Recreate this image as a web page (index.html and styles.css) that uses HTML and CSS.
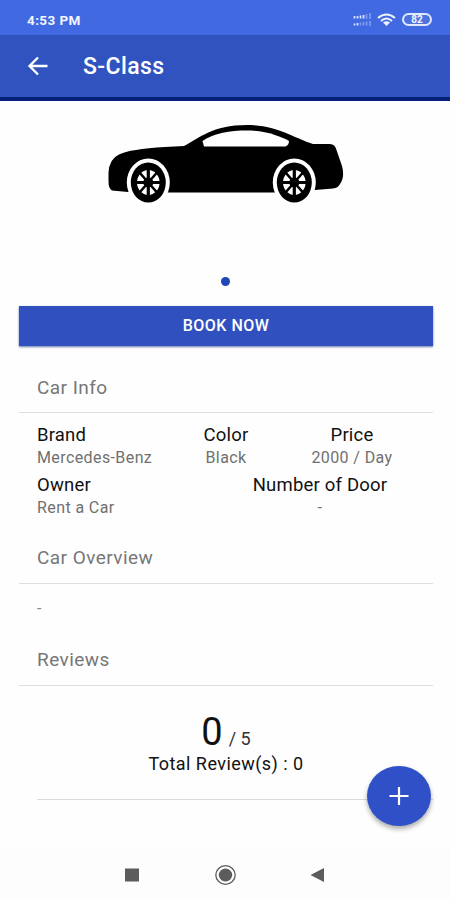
FILE: index.html
```html
<!DOCTYPE html>
<html lang="en">
<head>
<meta charset="utf-8">
<title>S-Class</title>
<link rel="stylesheet" href="styles.css">
</head>
<body>
<div class="screen">
  <div class="status">
    <span class="time">4:53 PM</span>
    <div class="status-icons">
      <svg width="18" height="14" viewBox="0 0 18 14" fill="none" stroke="#dfe7ff" stroke-width="1.7">
        <path d="M1.5 3v2.5M4.500 3v2.5M7.500 2.500v3M10.500 2v3.500M1.500 10.500v2M4.500 10v2.500"/>
        <path d="M13.500 1v5M17 0v6M7.500 9.500v3M10.500 9v3.500M13.500 8.500v4M17 8v5" opacity=".4"/>
      </svg>
      <svg width="19" height="14" viewBox="0 0 19 14" fill="none" stroke="#eef3ff" stroke-width="2">
        <path d="M1 5Q9.500-2 18 5M4 8Q9.500 3 15 8"/><path d="M6 9.500Q9.500 7 13 9.500L9.500 13z" fill="#eef3ff" stroke="none"/>
      </svg>
      <div class="battery">82</div>
    </div>
  </div>
  <header class="bar">
    <svg width="22" height="20" viewBox="0 0 22 20" fill="none" stroke="#fff" stroke-width="2.300"><path d="M20.500 10H3M11 1.500L2.500 10L11 18.500"/></svg>
    <h1>S-Class</h1>
  </header>
  <section class="gallery">
    <svg class="car" width="240" height="84" viewBox="105 122 240 84">
      <path d="M112 190.500Q108.500 189 108.500 181V173Q109 159 119 154.500Q130 149 165 147L184 146C200 138 212 125 247 125C276 125 292 137 313 144H330Q335 144 336.500 150L342 166Q345 177 340 184Q338 188 333 188.500L315 190L275 192.500H168L128 192Z"/>
      <path fill="#fff" d="M202.500 141C214 133 230 130.500 247 130.500C265 130.500 280 136 289 141Q289 145 285.500 146.500H204Z"/>
      <g id="wheel-front">
        <ellipse cx="148.300" cy="182.500" rx="21.500" ry="24" fill="#fff"/>
        <ellipse cx="148.300" cy="182.500" rx="17.500" ry="20"/>
        <ellipse cx="148.300" cy="182.500" rx="11.300" ry="12.500" fill="#fff"/>
        <path d="M148.300 168V197M136 182.500H160.600" stroke="#000" stroke-width="3.200"/>
        <path d="M139.500 172.500L157 192.500M157 172.500L139.500 192.500" stroke="#000" stroke-width="2.600"/>
        <circle cx="148.300" cy="182.500" r="5"/>
      </g>
      <use href="#wheel-front" x="146"/>
    </svg>
    <i class="dot"></i>
  </section>
  <main>
    <button class="book">BOOK NOW</button>
    <h2 class="info-title">Car Info</h2>
    <div class="row three">
      <div class="left"><b>Brand</b><span>Mercedes-Benz</span></div>
      <div><b>Color</b><span>Black</span></div>
      <div><b>Price</b><span>2000 / Day</span></div>
    </div>
    <div class="row two">
      <div class="left"><b>Owner</b><span>Rent a Car</span></div>
      <div><b>Number of Door</b><span>-</span></div>
    </div>
    <h2 class="overview-title">Car Overview</h2>
    <p class="overview">-</p>
    <h2 class="reviews-title">Reviews</h2>
    <div class="score"><strong>0</strong><span>/ 5</span></div>
    <p class="total">Total Review(s) : 0</p>
    <hr>
  </main>
  <nav>
    <svg width="450" height="49" viewBox="0 0 450 49" fill="#5c5c5c">
      <path d="M125 17.500h14v13h-14zM324 17v14l-13.500-7z"/>
      <ellipse cx="225.500" cy="24" rx="6.700" ry="6.500"/><ellipse cx="225.500" cy="24" rx="9.700" ry="9.300" fill="none" stroke="#5c5c5c" stroke-width="1.300"/>
    </svg>
  </nav>
  <button class="fab" aria-label="Add">
    <svg width="20" height="20" viewBox="0 0 20 20" stroke="#fff" stroke-width="2.200"><path d="M10 1V19M.5 10H19.500"/></svg>
  </button>
</div>
</body>
</html>
```
FILE: styles.css
```css
* { box-sizing: border-box; margin: 0; }
body { font-family: Roboto, sans-serif; background: #fefefe; color: #111; }
svg { display: block; flex: none; }
button { font-family: inherit; border: 0; padding: 0; color: #fff; }
.screen { position: relative; width: 450px; height: 900px; overflow: hidden; display: flex; flex-direction: column; }
.status { height: 35px; background: #4169e1; display: flex; justify-content: space-between; align-items: center; padding: 4px 18px 0 27px; color: #f2f6ff; }
.time { font-size: 13.5px; font-weight: 700; letter-spacing: .4px; }
.status-icons { display: flex; align-items: center; gap: 6px; }
.battery { width: 30px; height: 13px; border: 2px solid #e0e8ff; border-radius: 7px; font-size: 10px; line-height: 9px; font-weight: 700; text-align: center; background: #4d72df; }
.bar { height: 66px; background: #3153c0; border-bottom: 4px solid #06207a; display: flex; align-items: center; padding-left: 27px; gap: 34px; color: #fff; }
.bar h1 { font-size: 23px; font-weight: 500; letter-spacing: .4px; }
.gallery { height: 205px; display: flex; flex-direction: column; align-items: center; padding-top: 21px; }
.dot { width: 9px; height: 9px; border-radius: 50%; background: #1f46b5; margin-top: 71px; }
main { height: 545px; padding: 0 17px 0 19px; }
.book { display: block; width: 100%; height: 40px; background: #3050c0; font-size: 16px; font-weight: 500; letter-spacing: .5px; padding-bottom: 2px; box-shadow: 0 1px 2px #6678a8; }
h2 { font-size: 19px; font-weight: 400; color: #777; border-bottom: 1px solid #dedede; padding-left: 18px; letter-spacing: .45px; }
.info-title { height: 67px; line-height: 83px; }
.row { display: grid; height: 50px; text-align: center; padding: 0 18px; }
.row div { display: flex; flex-direction: column; }
.row .left { text-align: left; }
.row b { font-size: 18.5px; line-height: 24px; font-weight: 400; letter-spacing: .2px; }
.row span { font-size: 16px; line-height: 22px; color: #707070; letter-spacing: .4px; }
.three { grid-template-columns: 1fr 1fr 1fr; margin-top: 10px; }
.two { grid-template-columns: 188px 190px; }
.overview-title { height: 61px; line-height: 70px; }
.overview { height: 49px; line-height: 49px; padding-left: 18px; font-size: 16px; color: #888; }
.reviews-title { height: 53px; line-height: 54px; }
.score { height: 65px; padding-top: 23px; display: flex; justify-content: center; align-items: baseline; gap: 6px; line-height: 46px; }
.score strong { font-size: 38px; font-weight: 400; }
.score span { font-size: 18px; color: #333; }
.total { text-align: center; font-size: 18px; line-height: 26px; letter-spacing: .45px; }
hr { border: 0; border-top: 1px solid #dcdcdc; margin: 22px 0 0 18px; }
nav { height: 49px; background: #fdfdfd; }
.fab { position: absolute; left: 367px; top: 766px; width: 64px; height: 60px; border-radius: 50%; background: #3050c8; display: flex; align-items: center; justify-content: center; box-shadow: 0 3px 5px #0005; }
```
